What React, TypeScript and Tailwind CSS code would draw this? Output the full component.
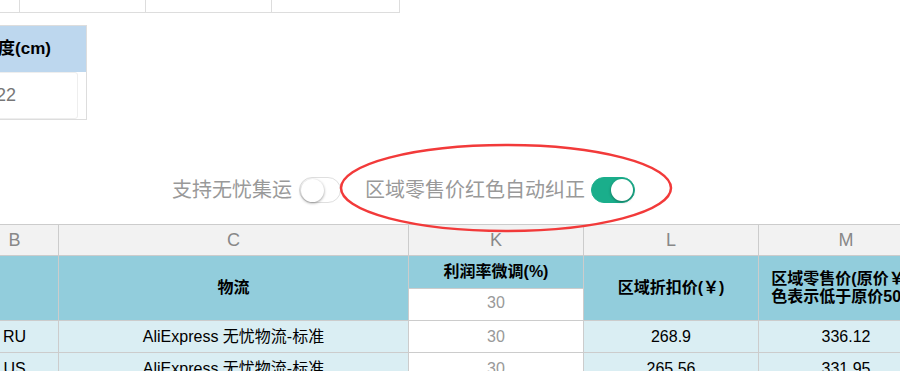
import React from "react";

const font = `font-["Liberation_Sans","Noto_Sans_CJK_SC",sans-serif]`;

function Toggle({ on }: { on: boolean }) {
  return on ? (
    <div className="flex h-[26px] w-[44px] items-center justify-end rounded-full border border-[#1aae8b] bg-[#1aae8b] p-[1px]">
      <div className="h-[22px] w-[22px] rounded-full bg-white shadow-[0_1px_3px_rgba(0,0,0,0.35)]" />
    </div>
  ) : (
    <div className="flex h-[26px] w-[42px] items-center justify-start rounded-full border border-[#dfdfdf] bg-white p-[1px]">
      <div className="h-[23px] w-[23px] rounded-full bg-white shadow-[0_1px_3px_rgba(0,0,0,0.4)]" />
    </div>
  );
}

const rows = [
  { b: "RU", c: "AliExpress 无忧物流-标准", k: "30", l: "268.9", m: "336.12" },
  { b: "US", c: "AliExpress 无忧物流-标准", k: "30", l: "265.56", m: "331.95" },
];

export default function App() {
  return (
    <div className={`relative h-[371px] w-[900px] overflow-hidden bg-white ${font}`}>
      {/* top strip of a table above */}
      <div className="flex h-[13px] w-[400px] border-b border-[#ddd]">
        <div className="w-[20px] border-r border-[#ddd]" />
        <div className="w-[126px] border-r border-[#ddd]" />
        <div className="w-[126px] border-r border-[#ddd]" />
        <div className="w-[128px] border-r border-[#ddd]" />
      </div>

      {/* size box */}
      <div className="ml-[-54px] mt-[12px] flex h-[95px] w-[141px] flex-col border border-[#ddd]">
        <div className="flex h-[46px] items-center justify-end bg-[#bdd7ee] pr-[35px] text-[17px] font-bold text-black">
          宽度(cm)
        </div>
        <div className="flex flex-1 justify-end pr-[8px]">
          <div className="flex w-[100px] items-center justify-end rounded-[3px] border border-[#eee] pr-[61px] text-[18px] text-[#777]">
            22
          </div>
        </div>
      </div>

      {/* toggles */}
      <div className="flex h-[104px] items-start pl-[172px] pt-[56px]">
        <div className="flex h-[28px] items-center">
          <span className="text-[20px] leading-none text-[#999]">支持无忧集运</span>
          <div className="ml-[7px]">
            <Toggle on={false} />
          </div>
          <span className="ml-[24px] text-[20px] leading-none text-[#999]">区域零售价红色自动纠正</span>
          <div className="ml-[6px]">
            <Toggle on={true} />
          </div>
        </div>
      </div>

      {/* sheet */}
      <table className="ml-[-30px] w-[963px] max-w-none table-fixed border-collapse text-[16px] text-black">
        <colgroup>
          <col className="w-[88px]" />
          <col className="w-[350px]" />
          <col className="w-[175px]" />
          <col className="w-[175px]" />
          <col className="w-[175px]" />
        </colgroup>
        <thead>
          <tr className="h-[31px] bg-[#f2f2f2] text-[18px] text-[#888]">
            {["B", "C", "K", "L", "M"].map((l) => (
              <th key={l} className="border border-[#ccc] p-0 text-center font-normal">
                {l}
              </th>
            ))}
          </tr>
          <tr className="h-[33px] bg-[#92cddc] text-[16px] font-bold">
            <th rowSpan={2} className="border border-[#ccc] p-0" />
            <th rowSpan={2} className="border border-[#ccc] p-0">物流</th>
            <th className="border border-[#ccc] p-0">利润率微调(%)</th>
            <th rowSpan={2} className="border border-[#ccc] p-0">区域折扣价(￥)</th>
            <th rowSpan={2} className="border border-[#ccc] px-[6px] py-0 leading-[18px]">
              区域零售价(原价￥红色表示低于原价50%)
            </th>
          </tr>
          <tr className="h-[32px]">
            <th className="border border-[#ccc] bg-white p-0 pb-[3px] text-[16px] font-normal text-[#999]">30</th>
          </tr>
        </thead>
        <tbody>
          {rows.map((r) => (
            <tr key={r.b} className="h-[32px] bg-[#daeef3]">
              <td className="border border-[#ccc] p-0 text-center">{r.b}</td>
              <td className="border border-[#ccc] p-0 text-center">{r.c}</td>
              <td className="border border-[#ccc] bg-white p-0 text-center text-[#999]">{r.k}</td>
              <td className="border border-[#ccc] p-0 text-center">{r.l}</td>
              <td className="border border-[#ccc] p-0 text-center">{r.m}</td>
            </tr>
          ))}
        </tbody>
      </table>

      {/* red annotation ring */}
      <svg className="pointer-events-none absolute left-0 top-0" width="900" height="371">
        <ellipse cx="506" cy="188" rx="165" ry="43" fill="none" stroke="#f23a3a" strokeWidth="2.5" />
      </svg>
    </div>
  );
}
